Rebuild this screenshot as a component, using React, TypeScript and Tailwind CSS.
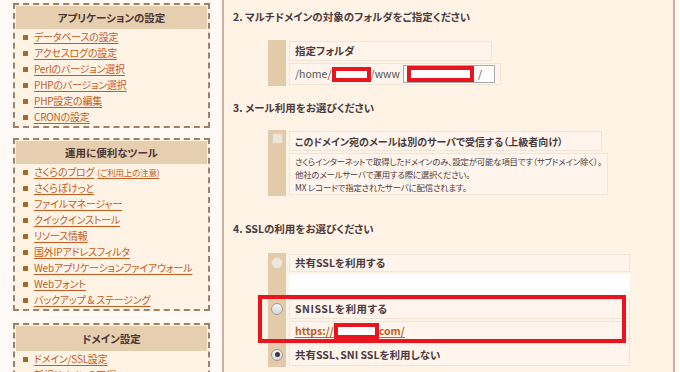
import React from "react"

const jp = "[font-family:'Noto_Sans_CJK_JP','Noto_Sans',sans-serif] [font-feature-settings:'palt']"

type Item = { label: string; note?: string }

const appItems: Item[] = [
  { label: "データベースの設定" },
  { label: "アクセスログの設定" },
  { label: "Perlのバージョン選択" },
  { label: "PHPのバージョン選択" },
  { label: "PHP設定の編集" },
  { label: "CRONの設定" },
]

const toolItems: Item[] = [
  { label: "さくらのブログ", note: "(ご利用上の注意)" },
  { label: "さくらぽけっと" },
  { label: "ファイルマネージャー" },
  { label: "クイックインストール" },
  { label: "リソース情報" },
  { label: "国外IPアドレスフィルタ" },
  { label: "Webアプリケーションファイアウォール" },
  { label: "Webフォント" },
  { label: "バックアップ & ステージング" },
]

const domainItems: Item[] = [{ label: "ドメイン/SSL設定" }, { label: "新規ドメインの取得" }]

function SideBox({ title, items, tall }: { title: string; items: Item[]; tall?: boolean }) {
  return (
    <div className="border-2 border-dashed border-[#9e8266] bg-[#fff3e6] p-px">
      <div
        className={`flex items-center justify-center bg-[#e6cfae] text-[10.5px] font-bold text-[#4d3434] ${
          tall ? "h-[25px]" : "h-[23px]"
        }`}
      >
        {title}
      </div>
      <ul>
        {items.map((it) => (
          <li key={it.label} className="flex h-[16px] items-center gap-[6px] pl-[7px] text-[10px] leading-none">
            <span className="h-[5px] w-[5px] shrink-0 bg-[#a86a2c]" />
            <span className="whitespace-nowrap tracking-[-0.2px] text-[#c45c22] underline underline-offset-2">
              {it.label}
              {it.note && <span className="ml-[3px] text-[8.5px]">{it.note}</span>}
            </span>
          </li>
        ))}
      </ul>
    </div>
  )
}

function Redact({ w, h = 15 }: { w: number; h?: number }) {
  return (
    <span
      className="inline-block border-4 border-[#e8141e] bg-white align-middle"
      style={{ width: w, height: h }}
    />
  )
}

function Radio({ checked, disabled }: { checked?: boolean; disabled?: boolean }) {
  return (
    <span
      className={`flex h-[12px] w-[12px] items-center justify-center rounded-full border ${
        disabled
          ? "border-[#ddd2c6] bg-[#eee6dd]"
          : "border-[#9d9d9d] bg-gradient-to-b from-[#f4f4f4] to-[#d6d6d6]"
      }`}
    >
      {checked && <span className="h-[5px] w-[5px] rounded-full bg-[#3a3a3a]" />}
    </span>
  )
}

function Row({
  control,
  children,
  white,
  h,
}: {
  control?: React.ReactNode
  children?: React.ReactNode
  white?: boolean
  h: number
}) {
  return (
    <div className="flex" style={{ height: h }}>
      <div className="flex w-[18px] shrink-0 items-center justify-center bg-[#e3cba9]">{control}</div>
      <div className="ml-[3px] flex-1 py-px">
        <div
          className={`flex h-full items-center border px-[5px] ${
            white ? "border-white bg-white" : "border-[#f4e4d5] bg-[#fff5ec]"
          }`}
        >
          {children}
        </div>
      </div>
    </div>
  )
}

function Heading({ children, className = "" }: { children: React.ReactNode; className?: string }) {
  return (
    <div className={`h-[14px] text-[10.5px] font-bold leading-[14px] text-[#4b3a3e] ${className}`}>{children}</div>
  )
}

export default function App() {
  return (
    <div className={`relative flex h-[372px] w-[680px] overflow-hidden bg-[#fffaf5] ${jp}`}>
      <aside className="flex w-[222px] shrink-0 flex-col gap-[10px] pl-[13px] pr-[12px] pt-[3px]">
        <SideBox title="アプリケーションの設定" items={appItems} />
        <SideBox title="運用に便利なツール" items={toolItems} />
        <div className="mt-[2px]">
          <SideBox title="ドメイン設定" items={domainItems} tall />
        </div>
      </aside>

      <main className="w-[453px] shrink-0 border-x-2 border-[#cbb19c] bg-[#fff3e6] pl-[9px] pt-[10px]">
        <Heading>2. マルチドメインの対象のフォルダをご指定ください</Heading>

        <div className="ml-[35px] mt-[16px] w-[224px]">
          <Row h={22}>
            <span className="text-[10.5px] font-bold text-[#4b3a3e]">指定フォルダ</span>
          </Row>
          <Row h={24}>
            <span className="flex items-center whitespace-nowrap text-[10.5px] text-[#555]">
              /home/
              <Redact w={39} />
              /www
              <span className="ml-[3px] flex h-[18px] w-[92px] items-center border border-[#a9a9a9] bg-white pl-[3px]">
                <Redact w={67} h={16} />
                <span className="ml-[4px]">/</span>
              </span>
            </span>
          </Row>
        </div>

        <Heading className="mt-[15px]">3. メール利用をお選びください</Heading>

        <div className="ml-[35px] mt-[15px] w-[334px]">
          <Row
            h={22}
            control={<span className="mt-[3px] h-[11px] w-[11px] self-start rounded-[2px] border border-[#ddd0c2] bg-[#eee5db]" />}
          >
            <span className="whitespace-nowrap text-[10px] font-bold text-[#4b3a3e]">
              このドメイン宛のメールは別のサーバで受信する（上級者向け）
            </span>
          </Row>
          <Row h={44}>
            <div className="whitespace-nowrap text-[8.4px] leading-[13px] tracking-[-0.15px] text-[#4b3a3e]">
              <div>さくらインターネットで取得したドメインのみ、設定が可能な項目です（サブドメイン除く）。</div>
              <div>他社のメールサーバで運用する際に選択ください。</div>
              <div>MX レコードで指定されたサーバに配信されます。</div>
            </div>
          </Row>
        </div>

        <Heading className="mt-[26px]">4. SSLの利用をお選びください</Heading>

        <div className="ml-[35px] mt-[17px] w-[362px]">
          <Row h={20} control={<Radio disabled />}>
            <span className="text-[10.5px] font-bold text-[#4b3a3e]">共有SSLを利用する</span>
          </Row>
          <Row h={25} white />
          <Row h={22} control={<Radio />}>
            <span className="text-[10.5px] font-bold tracking-[0.5px] text-[#4b3a3e]">SNISSLを利用する</span>
          </Row>
          <Row h={22}>
            <span className="flex items-center text-[10.5px] font-bold text-[#c45c22] underline underline-offset-2">
              https://
              <Redact w={45} h={16} />
              com/
            </span>
          </Row>
          <Row h={25} control={<Radio checked />}>
            <span className="text-[10.5px] font-bold text-[#4b3a3e]">共有SSL、SNI SSLを利用しない</span>
          </Row>
        </div>
      </main>

      <div className="pointer-events-none absolute left-[258px] top-[295px] h-[48px] w-[368px] border-4 border-[#e8141e]" />
    </div>
  )
}
